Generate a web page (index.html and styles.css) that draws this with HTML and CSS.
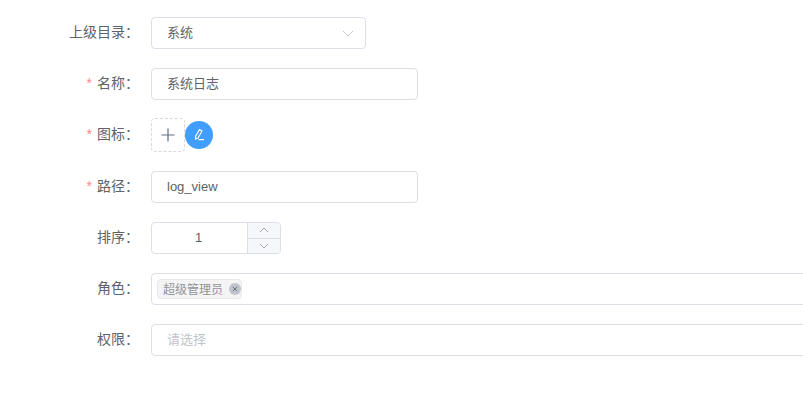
FILE: index.html
```html
<!DOCTYPE html>
<html lang="zh-CN">
<head>
    <meta charset="UTF-8">
    <title>菜单编辑</title>
    <link rel="stylesheet" href="styles.css">
</head>
<body>
    <form class="menu-form">
        <div class="form-item">
            <label class="form-label">上级目录：</label>
            <div class="select-box">
                <span class="input-text">系统</span>
                <svg class="select-arrow" width="12" height="7" viewBox="0 0 12 7"><path d="M1 1l5 5 5-5" fill="none" stroke="#c8cbd2" stroke-width="1"/></svg>
            </div>
        </div>
        <div class="form-item">
            <label class="form-label required">名称：</label>
            <div class="input-box medium"><span class="input-text">系统日志</span></div>
        </div>
        <div class="form-item icon-item">
            <label class="form-label required">图标：</label>
            <div class="icon-upload">
                <svg width="14" height="14" viewBox="0 0 14 14"><path d="M7 .5v13M.5 7h13" fill="none" stroke="#5f6f80" stroke-width="1.2"/></svg>
            </div>
            <button type="button" class="icon-edit">
                <svg width="14" height="14" viewBox="0 0 14 14"><path d="M7.5 1.5L10 3l-4 7-2.4 1V8.2zM6.5 11.6H12" fill="none" stroke="#fff" stroke-width="1.1"/></svg>
            </button>
        </div>
        <div class="form-item">
            <label class="form-label required">路径：</label>
            <div class="input-box medium"><span class="input-text latin">log_view</span></div>
        </div>
        <div class="form-item">
            <label class="form-label">排序：</label>
            <div class="number-box">
                <span class="number-value">1</span>
                <div class="number-steps">
                    <span class="step">
                        <svg width="10" height="6" viewBox="0 0 10 6"><path d="M1 5l4-4 4 4" fill="none" stroke="#a8adb6"/></svg>
                    </span>
                    <span class="step">
                        <svg width="10" height="6" viewBox="0 0 10 6"><path d="M1 1l4 4 4-4" fill="none" stroke="#a8adb6"/></svg>
                    </span>
                </div>
            </div>
        </div>
        <div class="form-item">
            <label class="form-label">角色：</label>
            <div class="input-box wide tags">
                <span class="tag">超级管理员<span class="tag-close">
                    <svg width="6" height="6" viewBox="0 0 6 6"><path d="M.8.8l4.4 4.4M5.2.8L.8 5.2" fill="none" stroke="#6f7580" stroke-width="1"/></svg>
                </span></span>
            </div>
        </div>
        <div class="form-item">
            <label class="form-label">权限：</label>
            <div class="input-box wide"><span class="input-text placeholder">请选择</span></div>
        </div>
    </form>
</body>
</html>
```

FILE: styles.css
```css
html, body {
    margin: 0;
    height: 100%;
    overflow: hidden;
    background-color: #fff;
}
body {
    font-family: "Liberation Sans", "Noto Sans CJK SC", sans-serif;
    font-size: 14px;
    color: #606266;
}
.menu-form {
    padding-top: 17px;
    overflow: hidden;
}
.form-item {
    display: flex;
    align-items: center;
    height: 32px;
    margin-bottom: 19px;
}
.icon-item {
    height: 34px;
    margin-top: -1px;
}
.form-label {
    flex: none;
    width: 139px;
    text-align: right;
    margin-right: 12px;
    margin-top: -4px;
}
.required::before {
    content: "*";
    color: #f78989;
    margin-right: 5px;
}
.input-box, .select-box, .number-box {
    box-sizing: border-box;
    height: 32px;
    border: 1px solid #dcdfe6;
    border-radius: 4px;
    display: flex;
    align-items: center;
    flex: none;
}
.medium {
    width: 267px;
}
.wide {
    width: 670px;
}
.select-box {
    width: 215px;
    justify-content: space-between;
    padding-right: 11px;
}
.input-text {
    font-size: 13px;
    padding-left: 15px;
    padding-bottom: 4px;
}
.latin {
    padding-bottom: 2px;
}
.placeholder {
    color: #c0c4cc;
}
.icon-upload {
    box-sizing: border-box;
    width: 34px;
    height: 34px;
    border: 1px dashed #d9d9d9;
    border-radius: 4px;
    display: flex;
    align-items: center;
    justify-content: center;
}
.icon-edit {
    width: 28px;
    height: 28px;
    padding: 0;
    border: none;
    border-radius: 50%;
    background-color: #409eff;
    display: flex;
    align-items: center;
    justify-content: center;
}
.number-box {
    width: 130px;
    overflow: hidden;
}
.number-value {
    flex: 1;
    font-size: 13px;
    text-align: center;
    padding: 0 2px 2px 0;
}
.number-steps {
    width: 32px;
    height: 100%;
    border-left: 1px solid #dcdfe6;
    display: flex;
    flex-direction: column;
}
.step {
    flex: 1;
    background-color: #f5f7fa;
    display: flex;
    align-items: center;
    justify-content: center;
}
.step + .step {
    border-top: 1px solid #dcdfe6;
}
.tags {
    padding-left: 5px;
}
.tag {
    box-sizing: border-box;
    height: 20px;
    padding: 0 0 1px 5px;
    width: 85px;
    display: flex;
    align-items: center;
    gap: 6px;
    font-size: 12px;
    color: #909399;
    background-color: #f4f4f5;
    border: 1px solid #e9e9eb;
    border-radius: 4px;
}
.tag-close {
    flex: none;
    width: 12px;
    height: 12px;
    border-radius: 50%;
    background-color: #c0c4cc;
    display: flex;
    align-items: center;
    justify-content: center;
}
```
